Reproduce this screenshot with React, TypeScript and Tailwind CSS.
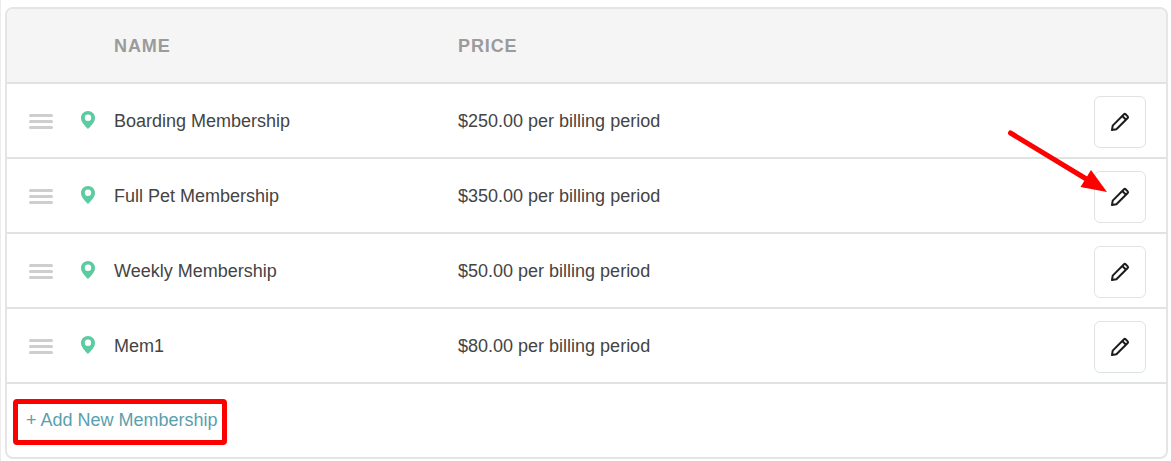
type Membership = {
  name: string;
  price: string;
  highlighted?: boolean;
};

const memberships: Membership[] = [
  { name: "Boarding Membership", price: "$250.00" },
  { name: "Full Pet Membership", price: "$350.00", highlighted: true },
  { name: "Weekly Membership", price: "$50.00" },
  { name: "Mem1", price: "$80.00" },
];

function PinIcon() {
  return (
    <svg width="14" height="18" viewBox="0 0 14 18" aria-hidden="true">
      <path
        fillRule="evenodd"
        fill="#5ccba0"
        d="M7 0C3.1 0 0 3.1 0 6.9C0 11 3.6 14.3 7 18C10.4 14.3 14 11 14 6.9C14 3.1 10.9 0 7 0ZM7 3.6A3.2 3.2 0 1 1 7 10A3.2 3.2 0 0 1 7 3.6Z"
      />
    </svg>
  );
}

function PencilIcon() {
  return (
    <svg
      width="20"
      height="20"
      viewBox="0 0 20 20"
      fill="none"
      stroke="#1c1c1c"
      strokeWidth="2"
      strokeLinejoin="round"
      aria-hidden="true"
    >
      <path d="M2 18L2.7 13.6L14 2.3Q14.8 1.5 15.6 2.3L17.7 4.4Q18.5 5.2 17.7 6L6.4 17.3Z" />
      <path d="M12.3 4L16 7.7" />
    </svg>
  );
}

function DragHandle() {
  return (
    <button type="button" aria-label="Reorder" className="flex w-6 flex-col gap-[3px] cursor-grab">
      <span className="h-[3px] w-full rounded-full bg-[#cecece]" />
      <span className="h-[3px] w-full rounded-full bg-[#cecece]" />
      <span className="h-[3px] w-full rounded-full bg-[#cecece]" />
    </button>
  );
}

function Arrow() {
  return (
    <svg
      className="pointer-events-none absolute -top-[42px] right-[38px]"
      width="102"
      height="64"
      viewBox="0 0 102 64"
      aria-hidden="true"
    >
      <path d="M4.5 4L82 51" stroke="#ff0000" strokeWidth="5" strokeLinecap="round" />
      <path d="M85 41L101 63L74.5 58Z" fill="#ff0000" />
    </svg>
  );
}

export default function App() {
  return (
    <div className="border-l border-[#ececec] pt-[7px] pb-[2px] pl-1 pr-[3px] font-['Liberation_Sans',Arial,sans-serif] text-lg leading-6 text-[#444]">
      <div className="overflow-hidden rounded-lg border-2 border-[#e3e6e4] bg-white">
        <table className="w-full table-fixed border-separate border-spacing-0 text-left">
          <thead>
            <tr className="h-[75px] bg-[#f5f5f5] text-[#9b9b9b]">
              <td className="w-[74px] border-b-2 border-[#dfe4df]" />
              <td className="w-[33px] border-b-2 border-[#dfe4df]" />
              <th className="w-[344px] border-b-2 border-[#dfe4df] tracking-wider">NAME</th>
              <th className="border-b-2 border-[#dfe4df] tracking-wider">PRICE</th>
              <td className="w-[92px] border-b-2 border-[#dfe4df]" />
            </tr>
          </thead>
          <tbody>
            {memberships.map((membership) => (
              <tr key={membership.name} className="h-[75px]">
                <td className="border-b-2 border-[#dfe4e1] pt-[2px] pl-[22px]">
                  <DragHandle />
                </td>
                <td className="border-b-2 border-[#dfe4e1] pb-[2px]">
                  <PinIcon />
                </td>
                <td className="border-b-2 border-[#dfe4e1]">{membership.name}</td>
                <td className="border-b-2 border-[#dfe4e1]">{membership.price} per billing period</td>
                <td className="border-b-2 border-[#dfe4e1] pr-5">
                  <div className="relative ml-auto mt-[2px] w-[52px]">
                    <button
                      type="button"
                      aria-label={`Edit ${membership.name}`}
                      className="flex size-[52px] items-center justify-center rounded-md border border-[#dfe3e3] bg-white"
                    >
                      <PencilIcon />
                    </button>
                    {membership.highlighted && <Arrow />}
                  </div>
                </td>
              </tr>
            ))}
          </tbody>
        </table>
        <div className="flex px-[6px] pt-[15px] pb-3">
          <div className="rounded-sm border-[5px] border-[#ff0000] pt-1 pr-1 pb-2 pl-2">
            <a href="#add" className="block text-[#5a9fae]">
              + Add New Membership
            </a>
          </div>
        </div>
      </div>
    </div>
  );
}
